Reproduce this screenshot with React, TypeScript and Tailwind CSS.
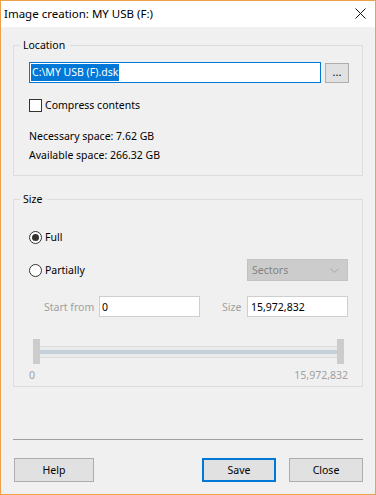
const GREY = "text-[#a0a0a0]";

function Radio({ checked }: { checked?: boolean }) {
  return (
    <span className="w-[13px] h-[13px] rounded-full border border-[#333333] bg-white flex items-center justify-center shrink-0">
      {checked && <span className="w-[7px] h-[7px] rounded-full bg-[#333333]" />}
    </span>
  );
}

function Button({ label, primary, width }: { label: string; primary?: boolean; width: string }) {
  return (
    <button
      className={
        width +
        " h-[24px] bg-[#e1e1e1] leading-none " +
        (primary ? "border-2 border-[#0078d7]" : "border border-[#adadad]")
      }
    >
      {label}
    </button>
  );
}

export default function App() {
  return (
    <div className="w-[376px] h-[495px] border border-[#f0a04b] bg-[#f0f0f0] flex flex-col text-[10.5px] leading-[16px] text-black font-['Noto_Sans',sans-serif]">
      {/* Title bar */}
      <div className="h-[26px] bg-white flex items-center justify-between pl-[3px] pr-[9px] shrink-0 text-[11.5px]">
        <span>Image creation: MY USB (F:)</span>
        <svg width="11" height="11" viewBox="0 0 11 11" className="mb-[2px]">
          <path d="M0.5 0.5L10.5 10.5M10.5 0.5L0.5 10.5" stroke="#111" strokeWidth="1" />
        </svg>
      </div>

      <div className="flex flex-col px-[12px]">
        {/* Location */}
        <fieldset className="mt-[10px] border border-[#dcdcdc] h-[139px] pl-[15px] pr-[13px]">
          <legend className="ml-[-9px] pl-[3px] pr-[5px]">Location</legend>
          <div className="flex gap-[4px] mt-[9px]">
            <div className="w-[292px] h-[21px] border border-[#0078d7] bg-white flex items-center pl-[1px]">
              <span className="bg-[#0078d7] text-white leading-[17px] px-[1px]">C:\MY USB (F).dsk</span>
            </div>
            <button className="w-[24px] h-[20px] mt-[1px] border border-[#adadad] bg-[#e1e1e1] text-[11px] leading-none pb-[3px]">
              ...
            </button>
          </div>
          <label className="flex items-center gap-[3px] mt-[14px]">
            <span className="w-[13px] h-[13px] border border-[#333333] bg-white shrink-0" />
            <span>Compress contents</span>
          </label>
          <div className="mt-[14px] leading-[19px]">
            <div>Necessary space: 7.62 GB</div>
            <div>Available space: 266.32 GB</div>
          </div>
        </fieldset>

        {/* Size */}
        <fieldset className="mt-[15px] border border-[#dcdcdc] h-[196px] pl-[15px] pr-[14px]">
          <legend className="ml-[-9px] pl-[3px] pr-[5px]">Size</legend>
          <label className="flex items-center gap-[3px] mt-[22px]">
            <Radio checked />
            <span>Full</span>
          </label>
          <div className="flex items-center justify-between mt-[14px]">
            <label className="flex items-center gap-[3px]">
              <Radio />
              <span>Partially</span>
            </label>
            <div className="w-[101px] h-[22px] bg-[#cccccc] border border-[#c3c3c3] flex items-center justify-between pl-[4px] pr-[8px] text-[#838383]">
              <span>Sectors</span>
              <svg width="9" height="5" viewBox="0 0 9 5">
                <path d="M0.5 0.5L4.5 4.5L8.5 0.5" stroke="#a8a8a8" fill="none" />
              </svg>
            </div>
          </div>
          <div className="flex items-center mt-[15px] pl-[15px] whitespace-nowrap">
            <span className={GREY + " w-[55px]"}>Start from</span>
            <div className="w-[101px] h-[21px] bg-white border border-[#cfcfcf] flex items-center pl-[2px]">0</div>
            <span className={GREY + " ml-[22px] w-[25px]"}>Size</span>
            <div className="w-[101px] h-[21px] bg-white border border-[#cfcfcf] flex items-center pl-[3px]">15,972,832</div>
          </div>

          {/* Slider */}
          <div className="flex items-center mt-[22px] pl-[4px] pr-[4px]">
            <div className="w-[7px] h-[25px] bg-[#cccccc] shrink-0" />
            <div className="flex-1 h-[12px] bg-[#ebebeb] border-y border-[#dcdcdc] flex items-center">
              <div className="w-full h-[4px] bg-[#c6d0db]" />
            </div>
            <div className="w-[7px] h-[25px] bg-[#cccccc] shrink-0" />
          </div>
          <div className={GREY + " flex justify-between mt-[3px]"}>
            <span>0</span>
            <span>15,972,832</span>
          </div>
        </fieldset>

        {/* Separator */}
        <div className="mt-[52px] h-px bg-[#a0a0a0]" />

        {/* Buttons */}
        <div className="flex justify-between mt-[18px]">
          <div className="ml-[1px] flex">
            <Button label="Help" width="w-[80px]" />
          </div>
          <div className="flex gap-[13px]">
            <Button label="Save" width="w-[74px]" primary />
            <Button label="Close" width="w-[74px]" />
          </div>
        </div>
      </div>
    </div>
  );
}
